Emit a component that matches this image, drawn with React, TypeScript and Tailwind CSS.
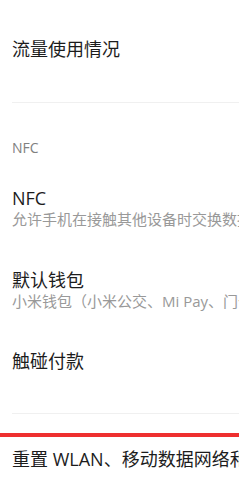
import React from "react";

const font = { fontFamily: '"Open Sans", "Noto Sans CJK SC", sans-serif' };

export default function App() {
  return (
    <div className="w-[239px] h-[491px] bg-white overflow-hidden flex flex-col" style={font}>
      <div className="h-[102px] pl-3 pt-[37px] shrink-0">
        <div className="text-[18px] leading-[24px] text-[#1c1c1c] whitespace-nowrap">流量使用情况</div>
      </div>
      <div className="ml-3 h-px bg-[#f0f0f0] shrink-0" />
      <div className="pl-3 pt-[35px] shrink-0">
        <div className="text-[14px] leading-[20px] text-[#808080] whitespace-nowrap">NFC</div>
      </div>
      <div className="pl-3 pt-[29px] shrink-0">
        <div className="text-[18px] leading-[22px] text-[#1c1c1c] whitespace-nowrap">NFC</div>
        <div className="text-[15px] leading-[20px] text-[#999999] whitespace-nowrap">允许手机在接触其他设备时交换数据</div>
      </div>
      <div className="pl-3 pt-[40px] shrink-0">
        <div className="text-[18px] leading-[22px] text-[#1c1c1c] whitespace-nowrap">默认钱包</div>
        <div className="text-[15px] leading-[20px] text-[#999999] whitespace-nowrap">小米钱包（小米公交、Mi Pay、门卡等）</div>
      </div>
      <div className="pl-3 pt-[39px] shrink-0">
        <div className="text-[18px] leading-[22px] text-[#1c1c1c] whitespace-nowrap">触碰付款</div>
      </div>
      <div className="h-[41px] shrink-0" />
      <div className="ml-3 h-px bg-[#f0f0f0] shrink-0" />
      <div className="h-[19px] shrink-0" />
      <div className="h-[4px] bg-[#ee2f2f] shrink-0" />
      <div className="pl-3 pt-[11px] shrink-0">
        <div className="text-[18px] leading-[22px] text-[#1c1c1c] whitespace-nowrap">重置 WLAN、移动数据网络和蓝牙设置</div>
      </div>
    </div>
  );
}
